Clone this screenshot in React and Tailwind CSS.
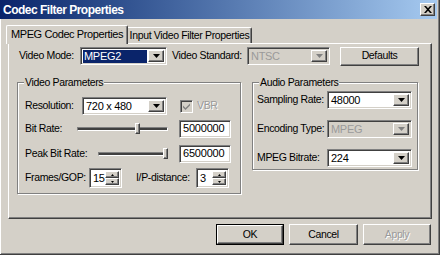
import React from "react";

const raised =
  "border border-t-white border-l-white border-b-[#404040] border-r-[#404040] shadow-[inset_-1px_-1px_#808080,inset_1px_1px_#d4d0c8] bg-[#d4d0c8]";
const sunken =
  "border border-t-[#808080] border-l-[#808080] border-b-white border-r-white shadow-[inset_1px_1px_#404040,inset_-1px_-1px_#d4d0c8]";

function Arrow({ disabled }) {
  return (
    <svg width="7" height="4" viewBox="0 0 7 4">
      <path d="M0 0h7L3.5 4z" fill={disabled ? "#808080" : "#000"} />
    </svg>
  );
}

function Combo({ value, width, disabled, selected, h = "h-[18px]" }) {
  return (
    <div
      className={`${sunken} ${h} ${width} shrink-0 flex items-center p-[2px] ${
        disabled ? "bg-[#d4d0c8]" : "bg-white"
      }`}
    >
      <div className="flex-1 flex items-center h-full min-w-0 pr-[1px]">
        <span
          className={`px-[1px] leading-[13px] text-[11px] tracking-[-0.3px] ${
            selected ? "bg-[#0a246a] text-white w-full" : disabled ? "text-[#9a9a9a]" : "text-black"
          }`}
        >
          {value}
        </span>
      </div>
      <div className={`${raised} w-[16px] h-full flex items-center justify-center`}>
        <Arrow disabled={disabled} />
      </div>
    </div>
  );
}

function Spin({ value, width }) {
  return (
    <div className={`${sunken} bg-white h-[20px] ${width} shrink-0 flex p-[2px]`}>
      <div className="flex-1 leading-[14px] pl-[1px] text-[11px]">{value}</div>
      <div className="w-[14px] flex flex-col">
        <div className={`${raised} flex-1 flex items-center justify-center`}>
          <svg width="3" height="2" viewBox="0 0 3 2">
            <path d="M1.5 0L3 2H0z" fill="#000" />
          </svg>
        </div>
        <div className={`${raised} flex-1 flex items-center justify-center`}>
          <svg width="3" height="2" viewBox="0 0 3 2">
            <path d="M0 0h3L1.5 2z" fill="#000" />
          </svg>
        </div>
      </div>
    </div>
  );
}

function Slider({ width, thumb }) {
  return (
    <div className={`relative ${width} shrink-0 h-[12px] flex items-center`}>
      <div className="w-full h-[4px] border-t border-t-[#808080] border-l border-l-[#808080] border-b border-b-white border-r border-r-white bg-[#404040]" />
      <div
        className={`absolute top-[0px] w-[5px] h-[11px] ${raised}`}
        style={{ left: thumb }}
      />
    </div>
  );
}

function Button({ children, disabled, isDefault, className = "" }) {
  if (isDefault) {
    return (
      <div className={`border border-black ${className}`}>
        <div className={`${raised} w-full h-full flex items-center justify-center`}>{children}</div>
      </div>
    );
  }
  return (
    <div
      className={`${raised} flex items-center justify-center ${className} ${
        disabled ? "text-[#9a9a9a] [text-shadow:1px_1px_white]" : ""
      }`}
    >
      {children}
    </div>
  );
}

function Group({ label, className, children }) {
  return (
    <div
      className={`relative shrink-0 border border-[#808080] shadow-[inset_1px_1px_white,1px_1px_white] ${className}`}
    >
      <span className="absolute -top-[8px] left-[6px] bg-[#d4d0c8] px-[1px] leading-[14px]">
        {label}
      </span>
      {children}
    </div>
  );
}

export default function App() {
  return (
    <div className="w-[440px] h-[255px] bg-[#d4d0c8] flex flex-col font-['Liberation_Sans',Arial,sans-serif] text-[10.5px] tracking-[-0.35px] whitespace-nowrap text-black overflow-hidden border-r border-b border-[#404040] shadow-[inset_1px_0_white,inset_-1px_-1px_#808080]">
      {/* title bar */}
      <div className="h-[19px] shrink-0 mr-[2px] flex items-center justify-between pl-[3px] pr-[2px] bg-linear-to-r from-[#0a246a] to-[#a6caf0]">
        <span className="text-white font-bold text-[12px] tracking-[-0.5px]">Codec Filter Properties</span>
        <div className={`${raised} w-[15px] h-[13px] flex items-center justify-center`}>
          <svg width="8" height="7" viewBox="0 0 8 7">
            <path d="M0 0h2l2 2.2L6 0h2L5 3.5 8 7H6L4 4.8 2 7H0l3-3.5z" fill="#000" />
          </svg>
        </div>
      </div>

      {/* tabs */}
      <div className="flex items-end h-[24px] shrink-0 pl-[6px]">
        <div className="relative z-10 -mb-px h-[19px] w-[122px] bg-[#d4d0c8] border-t border-l border-white border-r border-r-[#404040] shadow-[inset_-1px_0_#808080] rounded-t-[2px] flex items-center justify-center pb-[1px] text-[11px] tracking-[-0.4px]">
          MPEG Codec Properties
        </div>
        <div className="h-[16px] w-[124px] border-t border-white border-r border-r-[#404040] shadow-[inset_-1px_0_#808080] rounded-tr-[2px] flex items-center justify-center">
          Input Video Filter Properties
        </div>
      </div>

      {/* panel */}
      <div className="ml-[8px] w-[424px] h-[176px] shrink-0 flex flex-col border-t border-l border-white border-r border-b border-r-[#404040] border-b-[#404040] shadow-[inset_-1px_-1px_#808080]">
        <div className="flex items-center h-[18px] mt-[3px] pl-[10px]">
          <span className="w-[61px] shrink-0">Video Mode:</span>
          <Combo value="MPEG2" width="w-[87px]" selected />
          <span className="ml-[5px] w-[75px] shrink-0">Video Standard:</span>
          <Combo value="NTSC" width="w-[83px]" disabled />
          <Button className="ml-[10px] w-[79px] h-[19px]">Defaults</Button>
        </div>

        <div className="flex items-start pl-[8px] mt-[17px]">
          <Group label="Video Parameters" className="w-[224px] h-[112px] flex flex-col pl-[7px]">
            <div className="flex items-center mt-[14px] h-[18px]">
              <span className="w-[57px] shrink-0">Resolution:</span>
              <Combo value="720 x 480" width="w-[85px]" />
              <div className="ml-[13px] w-[13px] h-[13px] shrink-0 border border-t-[#808080] border-l-[#808080] border-b-white border-r-white shadow-[inset_1px_1px_#404040,inset_-1px_-1px_#d4d0c8] bg-[#d4d0c8] flex items-center justify-center">
                <svg width="7" height="7" viewBox="0 0 7 7">
                  <path d="M0 2.5l2.5 2.5L7 0.5v2L2.5 7 0 4.5z" fill="#808080" />
                </svg>
              </div>
              <span className="ml-[4px] text-[#9a9a9a] [text-shadow:1px_1px_white]">VBR</span>
            </div>
            <div className="flex items-center mt-[5px] h-[18px]">
              <span className="w-[52px] shrink-0">Bit Rate:</span>
              <Slider width="w-[91px]" thumb="58px" />
              <div className={`${sunken} bg-white ml-[11px] w-[52px] h-[18px] shrink-0 px-[3px] leading-[14px] text-[11px] tracking-[-0.2px]`}>5000000</div>
            </div>
            <div className="flex items-center mt-[7px] h-[18px]">
              <span className="w-[73px] shrink-0">Peak Bit Rate:</span>
              <Slider width="w-[70px]" thumb="65px" />
              <div className={`${sunken} bg-white ml-[11px] w-[52px] h-[18px] shrink-0 px-[3px] leading-[14px] text-[11px] tracking-[-0.2px]`}>6500000</div>
            </div>
            <div className="flex items-center mt-[5px] h-[20px]">
              <span className="w-[64px] shrink-0">Frames/GOP:</span>
              <Spin value="15" width="w-[33px]" />
              <span className="ml-[14px] w-[60px] shrink-0">I/P-distance:</span>
              <Spin value="3" width="w-[33px]" />
            </div>
          </Group>

          <Group label="Audio Parameters" className="ml-[11px] w-[166px] h-[88px] flex flex-col pl-[4px]">
            <div className="flex items-center mt-[8px] h-[18px]">
              <span className="w-[70px] shrink-0">Sampling Rate:</span>
              <Combo value="48000" width="w-[85px]" />
            </div>
            <div className="flex items-center mt-[11px] h-[18px]">
              <span className="w-[70px] shrink-0">Encoding Type:</span>
              <Combo value="MPEG" width="w-[85px]" disabled />
            </div>
            <div className="flex items-center mt-[11px] h-[18px]">
              <span className="w-[70px] shrink-0">MPEG Bitrate:</span>
              <Combo value="224" width="w-[85px]" />
            </div>
          </Group>
        </div>
      </div>

      {/* buttons */}
      <div className="flex justify-end gap-[5px] pr-[8px] mt-[5px]">
        <Button isDefault className="w-[68px] h-[21px]">OK</Button>
        <Button className="w-[69px] h-[21px]">Cancel</Button>
        <Button disabled className="w-[68px] h-[21px]">Apply</Button>
      </div>
    </div>
  );
}
